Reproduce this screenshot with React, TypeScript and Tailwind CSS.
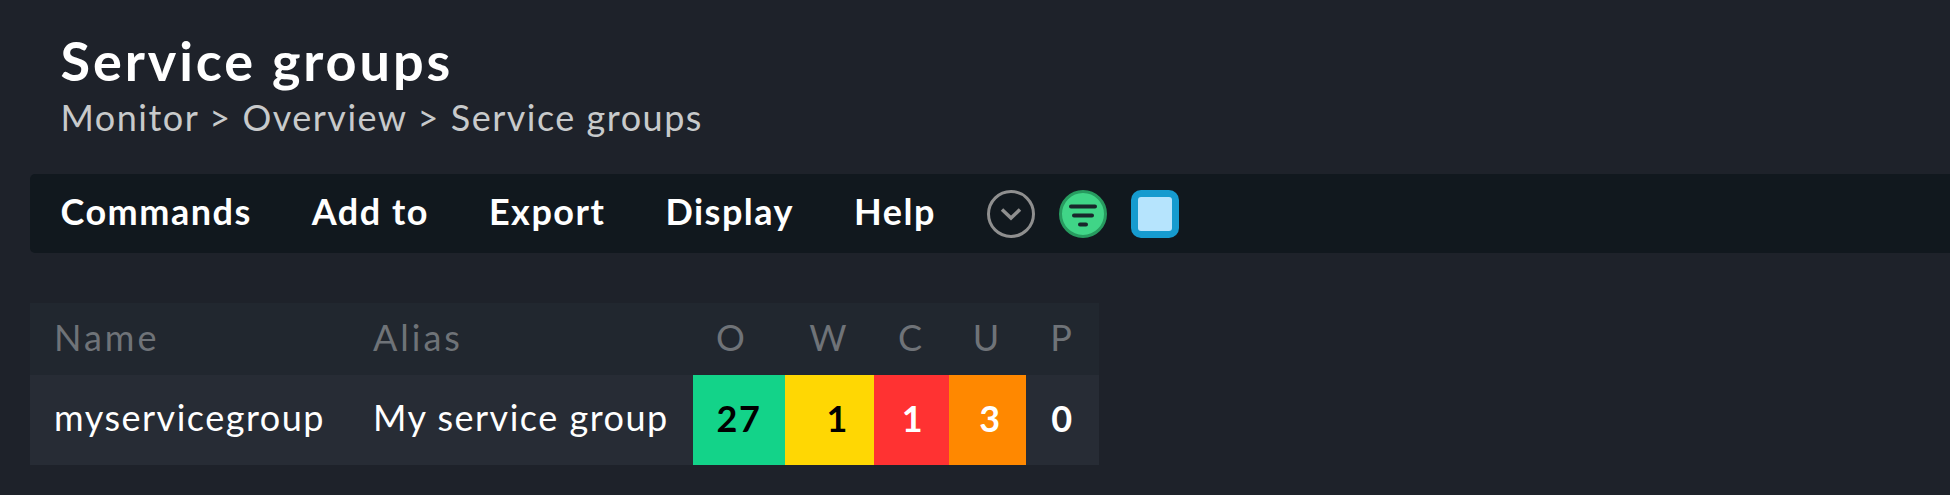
const headers = [
  { label: "O", width: "w-[92px] pr-[14px]" },
  { label: "W", width: "w-[89px]" },
  { label: "C", width: "w-[75px]" },
  { label: "U", width: "w-[77px]" },
  { label: "P", width: "w-[73px]" },
];

const counts = [
  { value: "27", width: "w-[92px]", color: "bg-[#13d389] text-black text-center" },
  { value: "1", width: "w-[89px]", color: "bg-[#ffd703] text-black text-right pr-[25px]" },
  { value: "1", width: "w-[75px]", color: "bg-[#ff3232] text-white text-center pl-[3px]" },
  { value: "3", width: "w-[77px]", color: "bg-[#ff8800] text-white text-center pl-[6px]" },
  { value: "0", width: "w-[73px]", color: "text-white text-center" },
];

const menus = ["Commands", "Add to", "Export", "Display", "Help"];

function ChevronCircleIcon() {
  return (
    <svg width="48" height="48" viewBox="0 0 48 48" fill="none">
      <circle cx="24" cy="24" r="22.5" stroke="#8f8f8f" strokeWidth="3" />
      <path d="M15 19.500l9 8.500 9-8.500" stroke="#8f8f8f" strokeWidth="3.500" />
    </svg>
  );
}

function FilterIcon() {
  return (
    <svg width="48" height="48" viewBox="0 0 48 48" fill="none">
      <circle cx="24" cy="24" r="22.5" fill="#40d587" stroke="#279b5f" strokeWidth="3" />
      <path d="M12 16.500h24M15 25.500h18M21 34.500h6" stroke="#19262b" strokeWidth="4" strokeLinecap="round" />
    </svg>
  );
}

function SquareIcon() {
  return (
    <svg width="48" height="48" viewBox="0 0 48 48" fill="none">
      <rect width="48" height="48" rx="10" fill="#169bcf" />
      <rect x="7" y="7" width="34" height="34" rx="3" fill="#b6e4fd" />
    </svg>
  );
}

export default function App() {
  return (
    <div className="h-[495px] w-[1950px] overflow-hidden bg-[#1e222a] font-['Lato',sans-serif]">
      <div className="pl-[60.5px] pt-[31px]">
        <h1 className="text-[54px] leading-[60px] font-bold tracking-[2.9px] text-white">Service groups</h1>
        <p className="text-[36px] leading-[52px] tracking-[1.5px] text-[#c8cacb]">Monitor &gt; Overview &gt; Service groups</p>
      </div>

      <div className="mt-[31px] ml-[30px] flex h-[79px] items-center rounded-l-[5px] bg-[#11181e] pl-[30.5px]">
        <div className="flex gap-[60px] pb-[5px] text-[36px] font-bold tracking-[1.5px] text-white">
          {menus.map((m) => (
            <span key={m}>{m}</span>
          ))}
        </div>
        <div className="ml-[51px] flex gap-[24px]">
          <ChevronCircleIcon />
          <FilterIcon />
          <SquareIcon />
        </div>
      </div>

      <div className="mt-[50px] ml-[30px] w-[1069px]">
        <div className="flex h-[72px] items-center bg-[#21272f] pb-[5px] text-[36px] tracking-[3px] text-[#6f7378]">
          <span className="w-[343px] pl-[24px]">Name</span>
          <span className="w-[320px]">Alias</span>
          {headers.map((h) => (
            <span key={h.label} className={`${h.width} text-center`}>{h.label}</span>
          ))}
        </div>
        <div className="flex h-[90px] bg-[#272c35] text-[36px] leading-[84px] tracking-[1.5px] text-white">
          <span className="w-[343px] pl-[24px]">myservicegroup</span>
          <span className="w-[320px]">My service group</span>
          {counts.map((c, i) => (
            <span key={i} className={`${c.width} ${c.color} h-[90px] leading-[86px] font-bold`}>{c.value}</span>
          ))}
        </div>
      </div>
    </div>
  );
}
